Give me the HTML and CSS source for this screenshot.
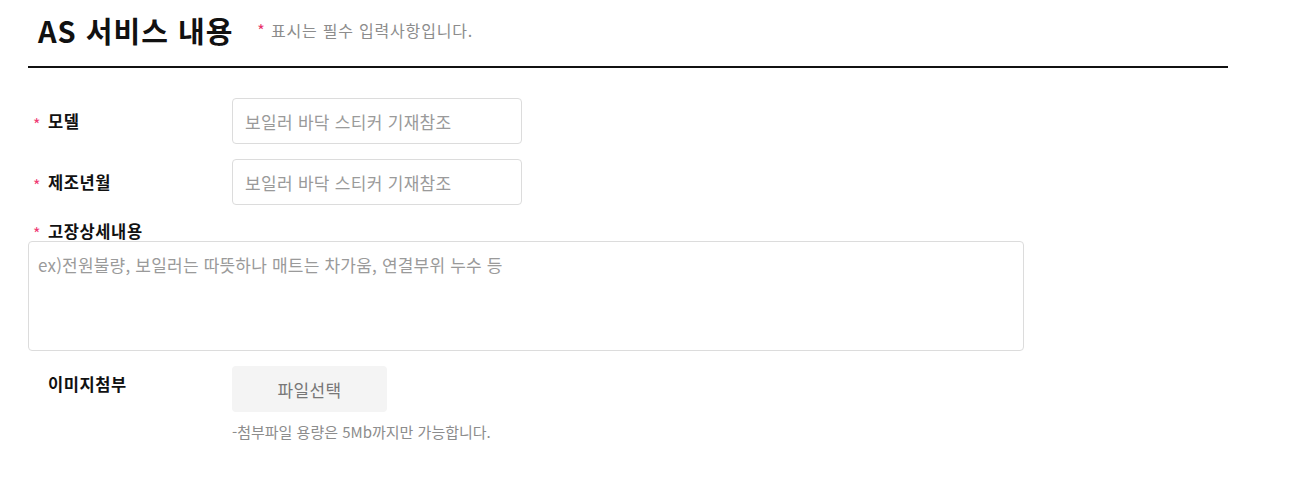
FILE: index.html
```html
<!DOCTYPE html>
<html lang="ko">
<head>
<meta charset="utf-8">
<title>AS 서비스 내용</title>
<link rel="stylesheet" href="styles.css">
</head>
<body>
<div class="wrap">
  <div class="head">
    <h2 class="title">AS 서비스 내용</h2>
    <p class="note"><span class="req">*</span> 표시는 필수 입력사항입니다.</p>
  </div>
  <form class="form">
    <div class="row">
      <label class="label"><span class="star">*</span>모델</label>
      <input class="input" type="text" placeholder="보일러 바닥 스티커 기재참조">
    </div>
    <div class="row">
      <label class="label"><span class="star">*</span>제조년월</label>
      <input class="input" type="text" placeholder="보일러 바닥 스티커 기재참조">
    </div>
    <div class="block">
      <label class="label"><span class="star">*</span>고장상세내용</label>
      <textarea class="area" placeholder="ex)전원불량, 보일러는 따뜻하나 매트는 차가움, 연결부위 누수 등"></textarea>
    </div>
    <div class="row top">
      <label class="label pad"><span class="star"></span>이미지첨부</label>
      <div class="file">
        <button type="button" class="btn">파일선택</button>
        <p class="help">-첨부파일 용량은 5Mb까지만 가능합니다.</p>
      </div>
    </div>
  </form>
</div>
</body>
</html>
```

FILE: styles.css
```css
* { box-sizing: border-box; }
body {
  margin: 0;
  background: #fff;
  font-family: "Noto Sans CJK KR", "Noto Sans", sans-serif;
  color: #111;
}
.wrap {
  width: 1228px;
  padding-left: 28px;
}
.head {
  height: 68px;
  display: flex;
  align-items: center;
  gap: 24px;
  padding-left: 10px;
  padding-bottom: 6px;
  border-bottom: 2px solid #111;
}
.title {
  margin: 0;
  font-size: 29px;
  font-weight: 700;
  line-height: 36px;
  letter-spacing: 1px;
}
.note {
  margin: 0;
  font-size: 16px;
  line-height: 22px;
  letter-spacing: 0.8px;
  color: #8c8c8c;
}
.req { color: #e8336a; }
.form {
  padding-top: 30px;
}
.row {
  display: flex;
  align-items: center;
  margin-bottom: 15px;
}
.row.top { align-items: flex-start; }
.label {
  width: 204px;
  flex: none;
  display: flex;
  align-items: center;
  padding-left: 5px;
  font-size: 16.5px;
  font-weight: 700;
  line-height: 22px;
  letter-spacing: 0.6px;
  color: #111;
}
.label.pad { padding-top: 7px; }
.star {
  width: 15px;
  flex: none;
  color: #ef3b74;
  font-size: 16px;
  font-weight: 400;
  line-height: 15px;
  padding-top: 6px;
}
.input {
  width: 290px;
  height: 46px;
  border: 1px solid #dcdcdc;
  border-radius: 4px;
  padding: 0 12px;
  font-family: inherit;
  font-size: 17px;
  letter-spacing: 0.3px;
  color: #333;
  outline: none;
}
.input::placeholder, .area::placeholder { color: #9a9a9a; }
.block {
  display: flex;
  flex-direction: column;
  margin-bottom: 15px;
}
.block .label { height: 21px; }
.area {
  width: 996px;
  height: 110px;
  border: 1px solid #dcdcdc;
  border-radius: 4px;
  padding: 12px 9px 10px;
  font-family: inherit;
  font-size: 17px;
  letter-spacing: 0.2px;
  line-height: 22px;
  resize: none;
  outline: none;
}
.file {
  display: flex;
  flex-direction: column;
}
.btn {
  width: 155px;
  height: 46px;
  border: 0;
  border-radius: 4px;
  background: #f4f4f4;
  font-family: inherit;
  font-size: 17px;
  letter-spacing: 0.3px;
  color: #777;
}
.help {
  margin: 10px 0 0;
  font-size: 15px;
  line-height: 20px;
  color: #8c8c8c;
}
```
